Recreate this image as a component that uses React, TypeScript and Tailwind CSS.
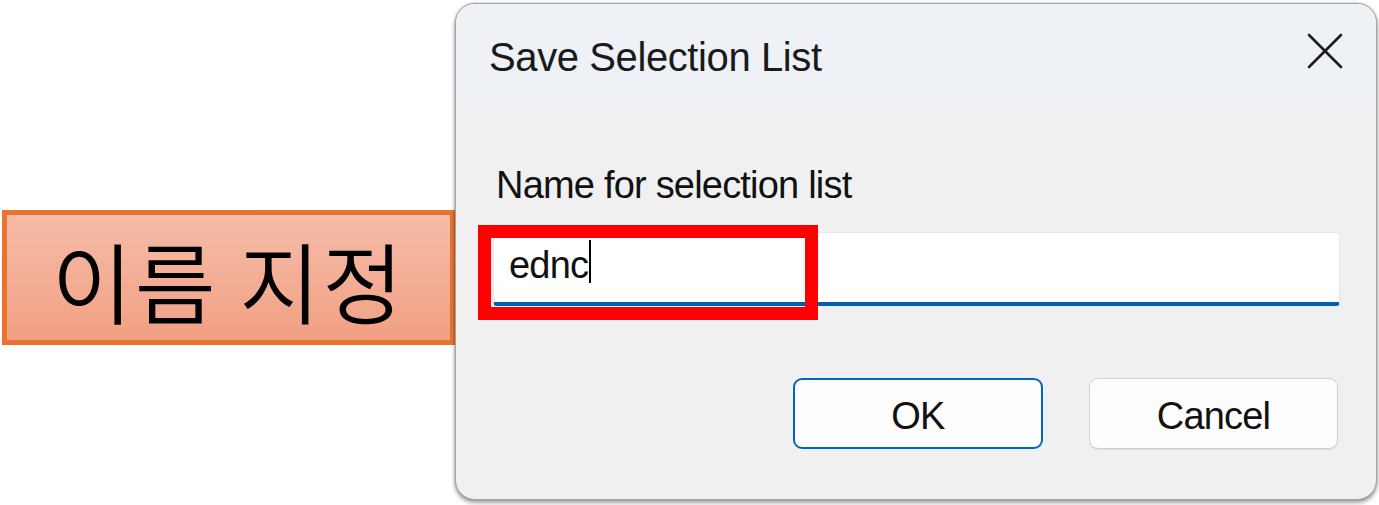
import React from "react";

function CloseIcon() {
  return (
    <svg width="36" height="36" viewBox="0 0 36 36" fill="none">
      <path d="M2 2 L34 34 M34 2 L2 34" stroke="#1c1c1c" strokeWidth="2.6" strokeLinecap="round" />
    </svg>
  );
}

export default function App() {
  return (
    <div className="flex h-[505px] w-[1379px] bg-white font-['Liberation_Sans',Arial,sans-serif] text-[#111]">
      {/* Etiqueta naranja */}
      <div className="ml-[2px] mt-[210px] flex h-[135px] w-[453px] shrink-0 items-center justify-center border-[5px] border-[#e8732f] bg-linear-to-b from-[#f5bca8] to-[#f1a083]">
        <span className="mt-[2px] font-['Noto_Sans_CJK_KR',sans-serif] text-[88px] font-[350] leading-none tracking-[2px] text-black">
          이름 지정
        </span>
      </div>

      {/* Dialogo */}
      <div className="mt-[3px] flex h-[497px] w-[922px] shrink-0 flex-col overflow-hidden rounded-[20px] border border-[#a3a3a3] bg-[#f0f0f0] shadow-[0_0_3px_rgba(0,0,0,0.25),0_3px_4px_rgba(0,0,0,0.35)]">
        <div className="flex h-[102px] shrink-0 items-start justify-between bg-[#eef2f7] pl-[33px] pr-[33px]">
          <span className="mt-[33px] text-[40px] leading-none tracking-[-0.4px] text-[#1a1a1a]">
            Save Selection List
          </span>
          <div className="mt-[29px]">
            <CloseIcon />
          </div>
        </div>

        <div className="flex flex-col pl-[37px] pr-[36px]">
          <span className="mt-[60px] pl-[3px] text-[38px] leading-none tracking-[-0.8px] text-[#111]">
            Name for selection list
          </span>

          <div className="relative mt-[28px] flex h-[74px] items-start rounded-[4px] border-x border-t border-b-4 border-x-[#e3e6ea] border-t-[#e8e8e8] border-b-[#005fb8] bg-white pl-[15px]">
            <span className="mt-[13px] text-[38px] leading-none tracking-[-0.8px] text-[#111]">ednc</span>
            <span className="ml-[1px] mt-[7px] h-[43px] w-[2px] bg-black" />
            <div className="absolute left-[-16px] top-[-8px] h-[95px] w-[340px] border-[13px] border-[#ff0000]" />
          </div>

          <div className="mt-[72px] flex justify-end gap-[46px] pr-[2px]">
            <button className="flex h-[71px] w-[250px] items-center justify-center rounded-[9px] border-2 border-[#0067c0] bg-[#fdfdfd] pt-[4px] text-[38px] leading-none tracking-[-0.8px] text-[#111]">
              OK
            </button>
            <button className="flex h-[71px] w-[249px] items-center justify-center rounded-[9px] border border-[#d0d0d0] bg-[#fdfdfd] pt-[4px] text-[38px] leading-none tracking-[-0.8px] text-[#111] shadow-[0_1px_0_rgba(0,0,0,0.08)]">
              Cancel
            </button>
          </div>
        </div>
      </div>
    </div>
  );
}
